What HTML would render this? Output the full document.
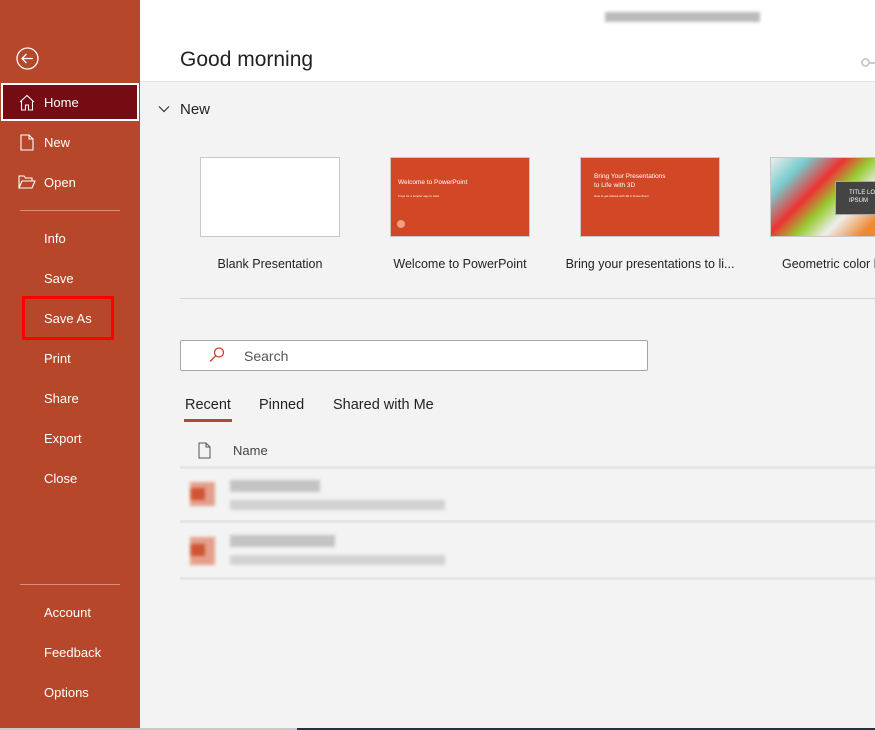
<!DOCTYPE html>
<html><head><style>
*{margin:0;padding:0;box-sizing:border-box}
body{width:875px;height:730px;overflow:hidden;background:#f3f3f3;font-family:"Liberation Sans",sans-serif;position:relative}
.side{position:absolute;left:0;top:0;width:140px;height:728px;background:#b7472a;color:#fff}
.it{position:absolute;left:44px;font-size:13px;line-height:16px}
.ic{position:absolute;left:18px}
.hdr{position:absolute;left:140px;top:0;right:0;height:82px;background:#fff;border-bottom:1px solid #e1e1e1}
.abs{position:absolute}
.th{position:absolute;top:157px;width:140px;height:80px;border:1px solid #c8c8c8}
.lb{position:absolute;top:257px;font-size:12.5px;color:#222;text-align:center;width:180px}
.blur{position:absolute;background:#c9c9c9;filter:blur(1.5px)}
</style></head><body>
<div class="hdr">
 <div class="abs" style="left:40px;top:48px;font-size:21px;color:#222">Good morning</div>
 <div class="blur" style="left:465px;top:12px;width:155px;height:10px;background:#bbb"></div>
 <div class="abs" style="left:721px;top:58px;width:9px;height:9px;border:2px solid #ccc;border-radius:50%"></div>
 <div class="abs" style="left:729px;top:62px;width:8px;height:2px;background:#ccc"></div>
</div>
<div class="side">
 <svg class="abs" style="left:16px;top:47px" width="23" height="23" viewBox="0 0 23 23"><circle cx="11.5" cy="11.5" r="10.5" fill="none" stroke="#fff" stroke-width="1.3"/><path d="M17 11.5H6M10.5 7l-4.5 4.5 4.5 4.5" fill="none" stroke="#fff" stroke-width="1.3"/></svg>
 <div class="abs" style="left:1px;top:83px;width:138px;height:38px;background:#750b13;border:2px solid #fff"></div>
 <svg class="ic" style="top:94px" width="18" height="17" viewBox="0 0 18 17"><path d="M2 8L9 1.5 16 8M3.5 7v9h4v-5h3v5h4V7" fill="none" stroke="#fff" stroke-width="1.1"/></svg>
 <div class="it" style="top:95px">Home</div>
 <svg class="ic" style="top:134px;left:20px" width="14" height="17" viewBox="0 0 14 17"><path d="M1 1h8l4 4v11H1z M9 1v4h4" fill="none" stroke="#fff" stroke-width="1.1"/></svg>
 <div class="it" style="top:135px">New</div>
 <svg class="ic" style="top:175px" width="18" height="14" viewBox="0 0 18 14"><path d="M1 13V1h5l1.5 2H14v3 M1 13l3-7h13l-3 7z" fill="none" stroke="#fff" stroke-width="1.1"/></svg>
 <div class="it" style="top:175px">Open</div>
 <div class="abs" style="left:20px;top:210px;width:100px;height:1px;background:#d98c77"></div>
 <div class="it" style="top:231px">Info</div>
 <div class="it" style="top:271px">Save</div>
 <div class="it" style="top:311px">Save As</div>
 <div class="abs" style="left:22px;top:296px;width:92px;height:44px;border:3px solid #f00"></div>
 <div class="it" style="top:351px">Print</div>
 <div class="it" style="top:391px">Share</div>
 <div class="it" style="top:431px">Export</div>
 <div class="it" style="top:471px">Close</div>
 <div class="abs" style="left:20px;top:584px;width:100px;height:1px;background:#d98c77"></div>
 <div class="it" style="top:605px">Account</div>
 <div class="it" style="top:645px">Feedback</div>
 <div class="it" style="top:685px">Options</div>
</div>
<svg class="abs" style="left:158px;top:105px" width="12" height="8" viewBox="0 0 12 8"><path d="M1 1.5l5 5 5-5" fill="none" stroke="#333" stroke-width="1.2"/></svg>
<div class="abs" style="left:180px;top:101px;font-size:15px;color:#222">New</div>
<div class="th" style="left:200px;background:#fff"></div>
<div class="th" style="left:390px;background:#d24726;color:#fff">
 <div class="abs" style="left:7px;top:21px;font-size:6.5px">Welcome to PowerPoint</div>
 <div class="abs" style="left:7px;top:36px;font-size:3px">5 tips for a simpler way to work</div>
 <div class="abs" style="left:6px;top:62px;width:8px;height:8px;border-radius:50%;background:#f0a080"></div>
</div>
<div class="th" style="left:580px;background:#d24726;color:#fff">
 <div class="abs" style="left:13px;top:14px;font-size:6.5px;line-height:9px">Bring Your Presentations<br>to Life with 3D</div>
 <div class="abs" style="left:13px;top:36px;font-size:3px">How to get started with 3D in PowerPoint</div>
</div>
<div class="th" style="left:770px;width:110px;background:linear-gradient(135deg,#eee 0%,#7cc 20%,#e33 40%,#9c3 55%,#eee 70%,#e83 90%)">
 <div class="abs" style="left:64px;top:23px;width:50px;height:34px;background:#444;border:1px solid #aaa;color:#fff;font-size:6px;padding:7px 0 0 13px;line-height:8px">TITLE LOR<br>IPSUM</div>
</div>
<div class="lb" style="left:180px">Blank Presentation</div>
<div class="lb" style="left:370px">Welcome to PowerPoint</div>
<div class="lb" style="left:560px;width:180px">Bring your presentations to li...</div>
<div class="lb" style="left:782px;width:120px;text-align:left">Geometric color b</div>
<div class="abs" style="left:180px;top:298px;width:695px;height:1px;background:#d6d6d6"></div>
<div class="abs" style="left:180px;top:340px;width:468px;height:31px;background:#fff;border:1px solid #a6a6a6;border-radius:2px"></div>
<svg class="abs" style="left:208px;top:346px" width="18" height="18" viewBox="0 0 18 18"><circle cx="11" cy="6.5" r="4.5" fill="none" stroke="#c43e1c" stroke-width="1.2"/><path d="M7.7 9.8L2 15.5" stroke="#c43e1c" stroke-width="1.3"/></svg>
<div class="abs" style="left:244px;top:348px;font-size:14px;color:#555">Search</div>
<div class="abs" style="left:185px;top:397px;font-size:14.5px;color:#222">Recent</div>
<div class="abs" style="left:184px;top:419px;width:48px;height:3px;background:#b7472a"></div>
<div class="abs" style="left:259px;top:397px;font-size:14.5px;color:#222">Pinned</div>
<div class="abs" style="left:333px;top:397px;font-size:14.5px;color:#222">Shared with Me</div>
<svg class="abs" style="left:198px;top:442px" width="14" height="17" viewBox="0 0 14 17"><path d="M1 1h7l4 4v11H1z M8 1v4h4" fill="none" stroke="#555" stroke-width="1"/></svg>
<div class="abs" style="left:233px;top:443px;font-size:13px;color:#444">Name</div>
<div class="abs" style="left:180px;top:466px;width:695px;height:3px;background:#e6e6e6"></div>
<div class="abs" style="left:180px;top:520px;width:695px;height:3px;background:#e6e6e6"></div>
<div class="abs" style="left:180px;top:577px;width:695px;height:3px;background:#e6e6e6"></div>
<div class="blur" style="left:190px;top:482px;width:25px;height:24px;background:#e4a08c"></div>
<div class="blur" style="left:191px;top:488px;width:14px;height:12px;background:#cf5434"></div>
<div class="blur" style="left:230px;top:480px;width:90px;height:12px;background:#c4c4c4"></div>
<div class="blur" style="left:230px;top:500px;width:215px;height:10px;background:#d2d2d2"></div>
<div class="blur" style="left:190px;top:537px;width:25px;height:28px;background:#e4a08c"></div>
<div class="blur" style="left:191px;top:544px;width:14px;height:12px;background:#cf5434"></div>
<div class="blur" style="left:230px;top:535px;width:105px;height:12px;background:#c4c4c4"></div>
<div class="blur" style="left:230px;top:555px;width:215px;height:10px;background:#d2d2d2"></div>
<div class="abs" style="left:0;top:728px;width:297px;height:2px;background:#c8c8c8"></div>
<div class="abs" style="left:297px;top:728px;width:578px;height:2px;background:#26323e"></div>
</body></html>
